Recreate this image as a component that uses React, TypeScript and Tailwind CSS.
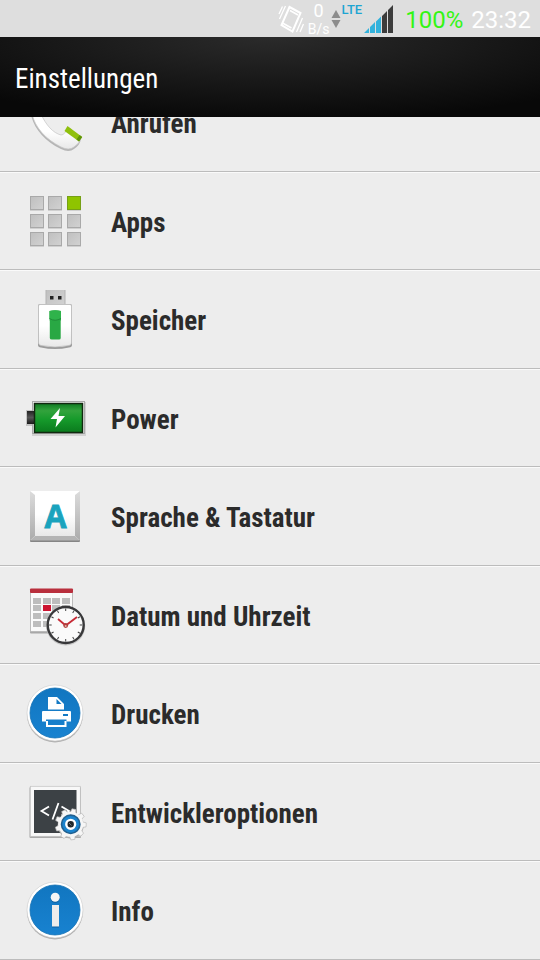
import type { ReactNode } from "react";

function IconSvg({ children }: { children: ReactNode }) {
  return (
    <svg viewBox="0 0 64 64" className="size-16 shrink-0 overflow-visible" aria-hidden="true">
      {children}
    </svg>
  );
}

function PhoneIcon() {
  return (
    <IconSvg>
      <path
        d="M8 24 C11 37 21 50 38 58 Q46 62 51 58 Q57 54 58 48 L45 37 Q42 45 38 45 C30 43 23 35 18 24 Z"
        fill="#b5b5b5"
        transform="translate(0 1)"
      />
      <path
        d="M9 24 C12 37 22 49 38 57 Q46 61 51 57 Q57 53 58 48 L45 37 Q42 45 38 45 C30 43 23 35 18 24 Z"
        fill="url(#whiteFade)"
        stroke="#c4c4c4"
        strokeWidth="0.7"
      />
      <path d="M44.500 36 L59.200 47 L56 51.500 L41.500 41 Z" fill="#8fc00d" />
      <path d="M59.200 47 L56 51.500 L53.500 49.600 L56.600 45 Z" fill="#5f9408" />
    </IconSvg>
  );
}

function AppsIcon() {
  return (
    <IconSvg>
      {[7, 25, 43].map((y) =>
        [7, 25, 44].map((x) => {
          const active = x === 44 && y === 7;
          return (
            <g key={`${x}-${y}`}>
              <rect x={x} y={y + 1} width="14" height="14" fill="#d0d0d0" />
              <rect
                x={x + 0.5}
                y={y + 0.5}
                width="13"
                height="13"
                fill={active ? "#8fc400" : "url(#tile)"}
                stroke={active ? "#76a016" : "#a9a9a9"}
              />
            </g>
          );
        }),
      )}
    </IconSvg>
  );
}

function StorageIcon() {
  return (
    <IconSvg>
      <rect x="23" y="3" width="19" height="15" fill="url(#tile)" />
      <path d="M23 3 V18 M42 3 V18" stroke="#b3b3b3" />
      <rect x="27" y="9" width="3.5" height="3.5" fill="#222" />
      <rect x="35" y="9" width="3.5" height="3.5" fill="#222" />
      <path d="M15 19 Q15 17 17 17 H47 Q49 17 49 19 V58 Q49 60 46 60.500 Q32 63.500 18 60.500 Q15 60 15 58 Z" fill="#9b9b9b" />
      <path d="M15.500 19 Q15.500 17.500 17 17.500 H47 Q48.500 17.500 48.500 19 V56 Q48.500 58 46 58.500 Q32 61.500 18 58.500 Q15.500 58 15.500 56 Z" fill="url(#whiteFade)" stroke="#bdbdbd" strokeWidth="0.7" />
      <path d="M26.500 24 Q32 22.500 38 24 V33 L37.700 34 V51 Q37.700 52.500 36 52.500 H29 Q26.800 52.500 26.800 51 V34 L26.500 33 Z" fill="#29a844" />
      <path d="M26.500 24 Q32 22.500 38 24 V31.500 Q32 35 26.500 31.500 Z" fill="#2fb34b" />
      <path d="M26.500 31.500 Q32 35 38 31.500" fill="none" stroke="#1f8c38" />
    </IconSvg>
  );
}

function PowerIcon() {
  return (
    <IconSvg>
      <rect x="9" y="16" width="54" height="34" fill="#d2d2d2" />
      <rect x="3" y="24" width="8" height="16" fill="#c4c4c4" />
      <rect x="9.500" y="15.500" width="52" height="32" fill="#f7f7f7" stroke="#a9a9a9" />
      <rect x="4" y="25" width="8" height="13" fill="url(#darkCap)" />
      <rect x="11.500" y="17.500" width="48" height="29" fill="url(#battery)" stroke="#10280f" strokeWidth="1.500" />
      <path d="M37 22 L27.500 33 H34 L32.500 41.500 L42 30 H35.500 Z" fill="#fff" />
    </IconSvg>
  );
}

function KeyboardIcon() {
  return (
    <IconSvg>
      <rect x="7" y="8" width="50" height="50" rx="1" fill="#858585" />
      <rect x="7" y="7" width="50" height="49" fill="#fff" />
      <path d="M7 7 L12 11 V52 L7 56.500 Z" fill="url(#bevel)" />
      <path d="M57 7 L52 11 V52 L57 56.500 Z" fill="url(#bevel)" />
      <path d="M7 56.500 L12 52 H52 L57 56.500 Z" fill="#b4b4b4" />
      <rect x="12" y="9" width="40" height="43" fill="url(#whiteFade)" />
      <text
        x="32.500"
        y="43.500"
        textAnchor="middle"
        fontSize="32"
        fontWeight="700"
        fill="#1aa3bd"
        stroke="#1aa3bd"
        strokeWidth="0.800"
        className="font-['Open_Sans',sans-serif]"
      >
        A
      </text>
    </IconSvg>
  );
}

function DateIcon() {
  return (
    <IconSvg>
      <rect x="7" y="8" width="43" height="42.500" rx="1" fill="#a8a8a8" />
      <rect x="7.400" y="7" width="42.200" height="41.500" fill="#fafafa" stroke="#b5b5b5" strokeWidth="0.800" />
      <rect x="7" y="5.500" width="43" height="4.500" rx="1" fill="#b92f3d" />
      {[15, 22, 30, 38].map((y) =>
        [10, 20, 29, 39].map((x) => (
          <rect key={`${x}-${y}`} x={x} y={y} width="8" height="6" fill={x === 20 && y === 22 ? "#cc1430" : "#bdbdbd"} />
        )),
      )}
      <circle cx="42.700" cy="43" r="19.500" fill="#c6c6c6" />
      <circle cx="42.700" cy="42" r="18" fill="#fafafa" stroke="#38383a" strokeWidth="2.400" />
      {Array.from({ length: 12 }, (_, i) => (
        <path key={i} d="M42.700 25.500 V28" stroke="#444" strokeWidth="1" transform={`rotate(${i * 30} 42.700 42)`} />
      ))}
      <path d="M35 36 L42.700 42.500 L54 34" fill="none" stroke="#c72c37" strokeWidth="1.800" />
      <circle cx="42.700" cy="42.500" r="2.400" fill="#b33c3c" />
      <circle cx="42.700" cy="43" r="1" fill="#d8b9a8" />
    </IconSvg>
  );
}

function BlueDisc() {
  return (
    <>
      <circle cx="32" cy="33.500" r="28" fill="#b0b0b0" />
      <circle cx="32" cy="32" r="28" fill="#fff" stroke="#cdcdcd" strokeWidth="0.600" />
      <circle cx="32" cy="32" r="25" fill="url(#disc)" stroke="#1170b4" strokeWidth="0.800" />
    </>
  );
}

function PrintIcon() {
  return (
    <IconSvg>
      <BlueDisc />
      <path d="M25 16 H34 L41 23 V28.500 H25 Z" fill="#fff" />
      <path d="M33.500 18 V23 H38.500 Z" fill="#1379c4" />
      <path d="M19 31 Q19 30 20 30 H47 Q48 30 48 31 V40.500 H43.500 V38.500 H23 V40.500 H19 Z" fill="#fff" />
      <rect x="40" y="33" width="5" height="2" fill="#1379c4" />
      <path d="M24 40 V45 H42.500 V40" fill="none" stroke="#fff" strokeWidth="2" />
    </IconSvg>
  );
}

function DeveloperIcon() {
  return (
    <IconSvg>
      <rect x="6.500" y="7" width="51.500" height="51" rx="1" fill="#aaa" />
      <rect x="7.300" y="6.300" width="50" height="50" fill="#f8f8f8" stroke="#c2c2c2" strokeWidth="0.700" />
      <rect x="11" y="10" width="42.500" height="43" fill="#3c4145" />
      <path d="M26 26.500 L18.500 31 L26 35.500 M35.500 23 L29.500 39.500 M38.500 26.500 L46 31 L38.500 35.500" fill="none" stroke="#fff" strokeWidth="1.800" />
      <circle cx="47.700" cy="45.500" r="13" fill="#b4b4b4" />
      <g fill="#f6f6f6" stroke="#b0b0b0" strokeWidth="0.600">
        {Array.from({ length: 9 }, (_, i) => (
          <path key={i} d="M44.800 33 L45.700 28.800 H49.700 L50.600 33 Z" transform={`rotate(${i * 40 + 12} 47.700 44.300)`} />
        ))}
      </g>
      <circle cx="47.700" cy="44.300" r="12.500" fill="#f6f6f6" />
      <circle cx="47.700" cy="44.300" r="9.200" fill="#1b83cd" stroke="#22608f" strokeWidth="1.600" />
      <circle cx="47.700" cy="44.300" r="4.400" fill="#20262b" stroke="#fff" strokeWidth="2.400" />
      <path d="M46 43 L48.500 45.500" stroke="#6c7780" />
    </IconSvg>
  );
}

function InfoIcon() {
  return (
    <IconSvg>
      <BlueDisc />
      <circle cx="32.200" cy="20.200" r="4.500" fill="#0d5f9f" />
      <circle cx="32.200" cy="19.200" r="4.500" fill="#f5f5f5" />
      <rect x="29" y="28" width="7" height="21.500" fill="#0d5f9f" />
      <rect x="29" y="27" width="7" height="21.500" fill="#ececec" />
    </IconSvg>
  );
}

function SharedGradients() {
  return (
    <svg className="absolute size-0" aria-hidden="true">
      <defs>
        <linearGradient id="whiteFade" x1="0" y1="0" x2="0" y2="1">
          <stop offset="0.500" stopColor="#fff" />
          <stop offset="1" stopColor="#e8e8e8" />
        </linearGradient>
        <linearGradient id="bevel" x1="0" y1="0" x2="0" y2="1">
          <stop offset="0" stopColor="#dcdcdc" />
          <stop offset="1" stopColor="#ababab" />
        </linearGradient>
        <linearGradient id="tile" x1="0" y1="0" x2="1" y2="1">
          <stop offset="0" stopColor="#bfbfbf" />
          <stop offset="1" stopColor="#d2d2d2" />
        </linearGradient>
        <linearGradient id="darkCap" x1="0" y1="0" x2="0" y2="1">
          <stop offset="0" stopColor="#222" />
          <stop offset="0.500" stopColor="#555" />
          <stop offset="1" stopColor="#1c1c1c" />
        </linearGradient>
        <linearGradient id="battery" x1="0" y1="0" x2="0" y2="1">
          <stop offset="0" stopColor="#0f7a22" />
          <stop offset="0.250" stopColor="#32a33c" />
          <stop offset="0.550" stopColor="#169a2b" />
          <stop offset="1" stopColor="#0a7a1d" />
        </linearGradient>
        <linearGradient id="disc" x1="0" y1="0" x2="0" y2="1">
          <stop offset="0" stopColor="#1176c0" />
          <stop offset="1" stopColor="#1882d0" />
        </linearGradient>
      </defs>
    </svg>
  );
}

const items = [
  { label: "Anrufen", Icon: PhoneIcon },
  { label: "Apps", Icon: AppsIcon },
  { label: "Speicher", Icon: StorageIcon },
  { label: "Power", Icon: PowerIcon },
  { label: "Sprache & Tastatur", Icon: KeyboardIcon },
  { label: "Datum und Uhrzeit", Icon: DateIcon },
  { label: "Drucken", Icon: PrintIcon },
  { label: "Entwickleroptionen", Icon: DeveloperIcon },
  { label: "Info", Icon: InfoIcon },
];

function StatusBar() {
  return (
    <div className="flex h-[37px] items-center justify-end bg-[#dedede] pr-[9px] font-['Roboto',sans-serif] text-white">
      <svg viewBox="0 0 26 32" className="mr-1 h-8 w-[26px]" fill="none" stroke="#fff" aria-hidden="true">
        <path d="M11.500 4 L22.500 10 L14.500 28.500 L3.500 22 Z" strokeWidth="2" />
        <path d="M12 7.500 L20 12 M4.500 20 L13.500 25" strokeWidth="1.500" />
        <path d="M7.500 3 L1.500 16 M4.500 3.500 L1 11 M24.500 15 L18.500 29 M25.500 21 L22 29" strokeWidth="1.300" />
      </svg>
      <div className="mr-[2px] flex flex-col items-center">
        <span className="text-[18px] leading-[21px]">0</span>
        <span className="text-[14px] leading-4">B/s</span>
      </div>
      <svg viewBox="0 0 10 20" className="h-5 w-[10px]" fill="#8c8c8c" aria-hidden="true">
        <path d="M5 1 L9.500 9 H0.500 Z M5 19 L9.500 11 H0.500 Z" />
      </svg>
      <span className="mr-[2px] self-start pt-[2px] text-[13px] leading-4 font-medium text-[#1ea5d2]">LTE</span>
      <svg viewBox="0 0 30 28" className="mr-[11px] h-7 w-[30px]" aria-hidden="true">
        <path d="M0 28 L5 23 V28 Z M6 28 V22 L11 17 V28 Z M12 28 V16.500 L17 11.500 V28 Z" fill="#32b2dc" />
        <path d="M18 28 V11 L23 6 V28 Z M24 28 V5 L29 0 V28 Z" fill="#3c3c3c" />
      </svg>
      <span className="mr-2 pt-[2px] text-[24px] leading-7 text-[#33f514]">100%</span>
      <time className="pt-[2px] text-[24px] leading-7">23:32</time>
    </div>
  );
}

export default function App() {
  return (
    <div className="flex min-h-screen flex-col bg-[#ededed] font-['Roboto_Condensed','Liberation_Sans_Narrow',sans-serif]">
      <SharedGradients />
      <StatusBar />
      <header className="flex h-20 items-center bg-[radial-gradient(ellipse_75%_105%_at_50%_0%,#2b2b2b,#080808)] px-[15px] pt-1">
        <h1 className="text-[27px] leading-9 text-white">Einstellungen</h1>
      </header>
      <main className="overflow-hidden">
        <ul className="-mt-11">
          {items.map(({ label, Icon }) => (
            <li key={label} className="odd:h-[99px] even:h-[98px]">
              <button
                type="button"
                className="flex h-full w-full items-start gap-6 border-t border-b border-t-[#fafafa] border-b-[#bcbcbc] px-[23px] pt-4 text-left"
              >
                <Icon />
                <span className="pt-[2px] text-[27px] leading-[64px] font-bold whitespace-nowrap text-[#2b2b2b]">{label}</span>
              </button>
            </li>
          ))}
        </ul>
      </main>
    </div>
  );
}
